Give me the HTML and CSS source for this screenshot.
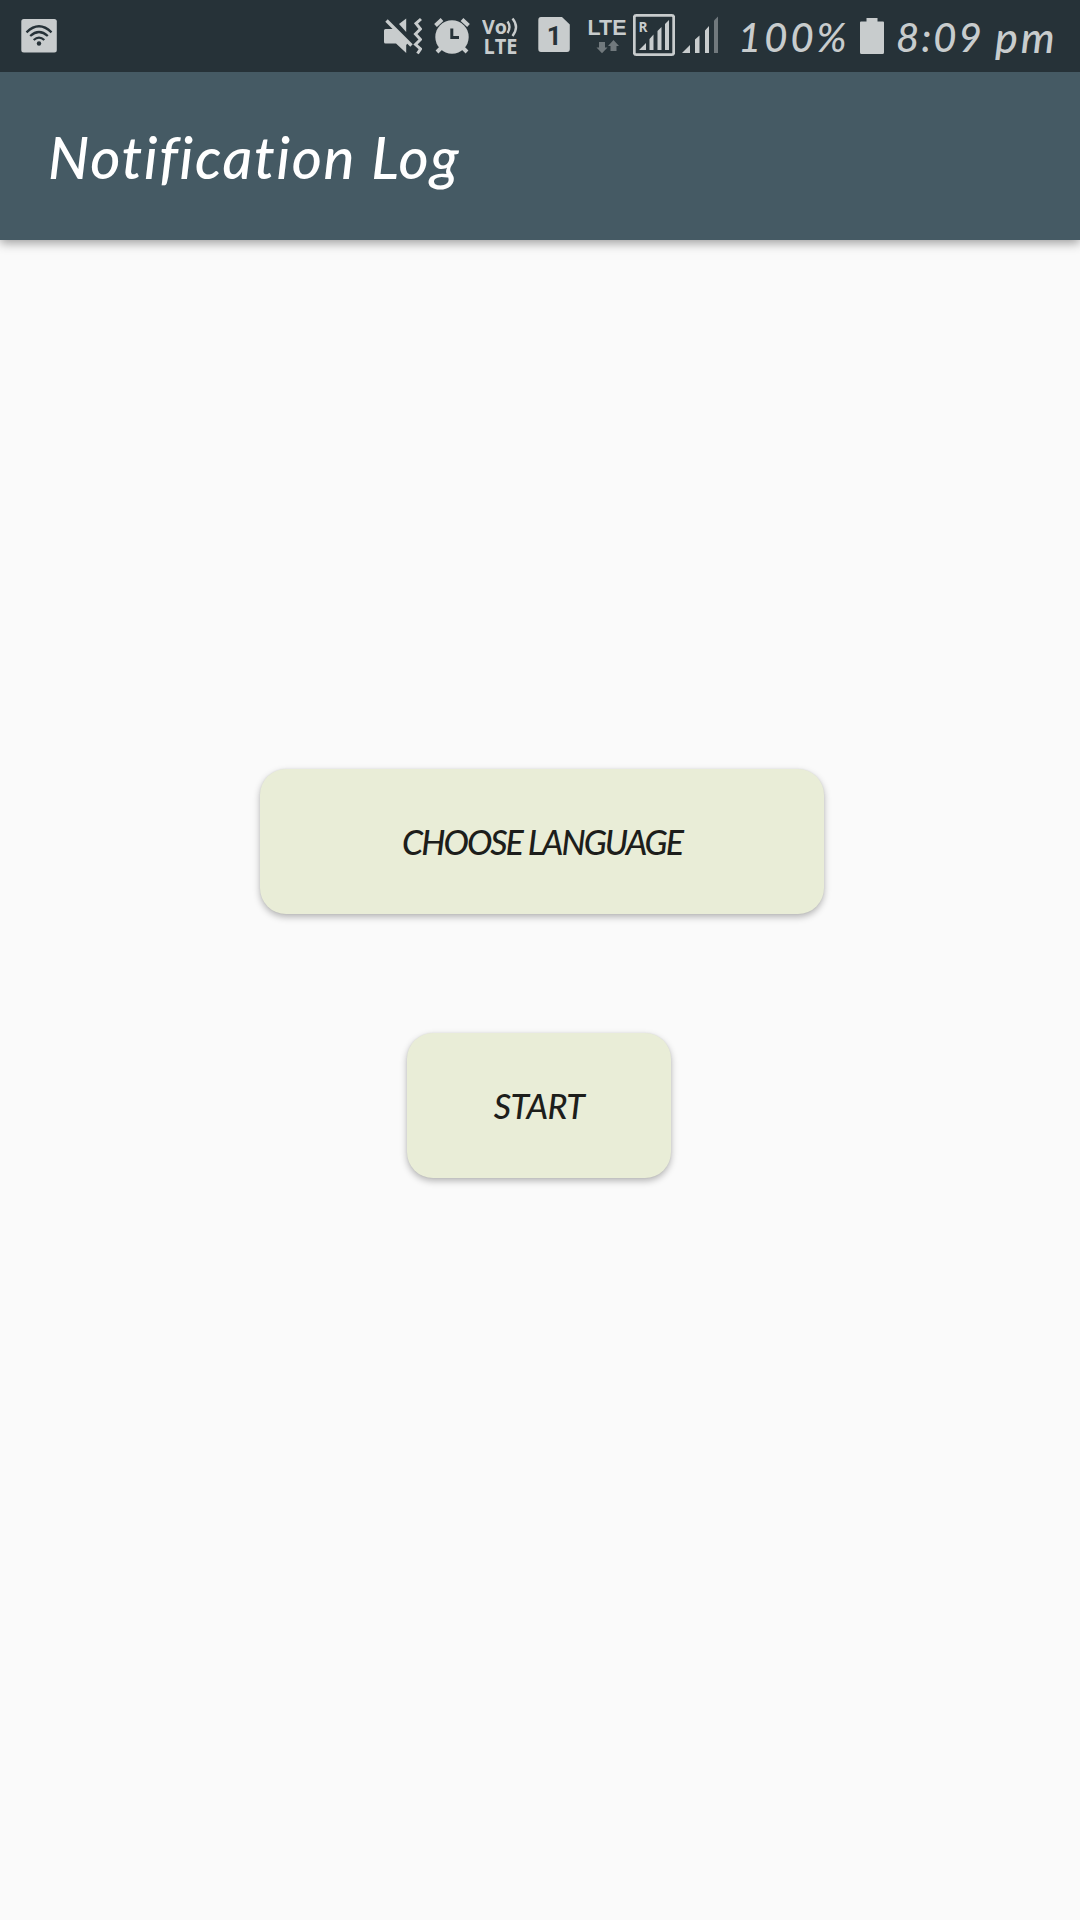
FILE: index.html
```html
<!DOCTYPE html>
<html lang="en">
<head>
<meta charset="utf-8">
<title>Notification Log</title>
<link rel="stylesheet" href="styles.css">
</head>
<body>
<div class="screen">
  <div class="status-bar">
    <svg class="icon wifi" width="36" height="72" viewBox="21 0 36 72">
      <rect x="21.3" y="19" width="35.5" height="33.5" rx="2.5" fill="#c8cccd"/>
      <g fill="none" stroke="#263238" stroke-width="2.3">
        <path d="M26.5 32.3Q39 20.3 51.5 32.3"/>
        <path d="M30.2 36Q39 28 47.8 36"/>
        <path d="M33.7 40Q39 35.3 44.3 40"/>
      </g>
      <circle cx="39" cy="43.5" r="2.2" fill="#263238"/>
    </svg>
    <div class="indicators">
      <svg class="icon mute" width="38" height="72" viewBox="384 0 38 72">
        <path d="M385.5 29H394L408 43L406.2 45V53L396 43.5H385.5Q384 43.5 384 42V30.5Q384 29 385.5 29ZM399 24L406.2 18.5V32Z"/>
        <path d="M386.5 20.5L411.5 45.5" fill="none" stroke="#c8cccd" stroke-width="3.4"/>
        <path d="M421 19L416 23.5L420.5 29L415.5 34L420.5 39.5L415.5 44.5L420.5 49L417.5 53.5" fill="none" stroke="#c8cccd" stroke-width="3"/>
      </svg>
      <svg class="icon alarm" width="36" height="72" viewBox="434 0 36 72">
        <circle cx="452" cy="37" r="16.7"/>
        <path d="M435.5 25.5L442 19.5M468.5 25.5L462 19.5M437 52L442 47M467 52L462 47" stroke="#c8cccd" stroke-width="4"/>
        <path d="M451.8 28.5V37.5H459" fill="none" stroke="#263238" stroke-width="3"/>
      </svg>
      <svg class="icon volte" width="38" height="72" viewBox="482 0 38 72">
        <text class="badge" x="482" y="33.7" font-size="20" textLength="25" lengthAdjust="spacingAndGlyphs">Vo</text>
        <text class="badge" x="483.5" y="53.5" font-size="21" textLength="34" lengthAdjust="spacingAndGlyphs">LTE</text>
        <path d="M507.5 21.5Q511.5 27 507.5 33M512.5 18.5Q519.5 27 512.5 36" fill="none" stroke="#c8cccd" stroke-width="2.4"/>
      </svg>
      <svg class="icon sim" width="32" height="72" viewBox="538 0 32 72">
        <path d="M541 17H562L569.8 24.5V49Q569.8 52 567 52H541Q538.3 52 538.3 49V20Q538.3 17 541 17Z"/>
        <text class="number" x="546.8" y="45" font-size="26">1</text>
      </svg>
      <svg class="icon lte" width="40" height="72" viewBox="588 0 40 72">
        <text class="badge wide" x="587.5" y="35" font-size="22" textLength="39" lengthAdjust="spacingAndGlyphs">LTE</text>
        <path d="M599 42H605V47.5H607.5L602 53.3L596.5 47.5H599ZM610.5 51H616.5V46H619L613.5 40L608 46H610.5Z" fill="#71797d"/>
      </svg>
      <svg class="icon roaming" width="42" height="72" viewBox="633 0 42 72">
        <rect x="634.3" y="15.3" width="39.4" height="39.4" rx="2" fill="none" stroke="#c8cccd" stroke-width="2.8"/>
        <text class="badge" x="638.5" y="32" font-size="14.5" textLength="9" lengthAdjust="spacingAndGlyphs">R</text>
        <path d="M639 50L646 43V50ZM649.5 50V39L653.5 34.5V50ZM657.5 50V31L661.5 27V50ZM665 50V24L669 20V50Z"/>
      </svg>
      <svg class="icon signal" width="36" height="72" viewBox="682 0 36 72">
        <path d="M682 53L690 45V53ZM695 53V39.5L699.5 35.5V53ZM705 53V30.5L709 26V53Z"/>
        <path d="M714 53V20.5L718 16.5V53Z" fill="#71797d"/>
      </svg>
      <span class="percent">100%</span>
      <svg class="icon battery" width="24" height="72" viewBox="860 0 24 72">
        <path d="M866.5 18H877.5V21.5H883Q884 21.5 884 22.5V52.5Q884 54 882.5 54H861.5Q860 54 860 52.5V22.5Q860 21.5 861 21.5H866.5Z"/>
      </svg>
      <span class="clock">8:09</span>
      <span class="period">pm</span>
    </div>
  </div>
  <header class="app-bar"><h1 class="title">Notification Log</h1></header>
  <main class="content">
    <button class="button language"><span>CHOOSE LANGUAGE</span></button>
    <button class="button start"><span>START</span></button>
  </main>
</div>
</body>
</html>
```
FILE: styles.css
```css
* { box-sizing: border-box; }
body { margin: 0; background: #fafafa; font-family: Lato, "Open Sans", sans-serif; font-style: italic; }
.screen { display: flex; flex-direction: column; width: 1080px; height: 1920px; overflow: hidden; background: #fafafa; }
.status-bar { position: relative; z-index: 1; display: flex; justify-content: space-between; height: 72px; padding-left: 21px; background: #263238; color: #c8cccd; }
.icon { flex: none; display: block; fill: #c8cccd; }
.badge { font-family: "Open Sans", sans-serif; font-style: normal; font-weight: 700; fill: #c8cccd; }
.wide { font-family: "Liberation Sans", sans-serif; }
.number { font-family: Roboto, sans-serif; font-style: normal; font-weight: 700; fill: #263238; }
.indicators { display: flex; width: 696px; font-size: 40px; font-weight: 500; line-height: 74px; white-space: nowrap; }
.alarm { margin-left: 12px; }
.volte { margin-left: 12px; }
.sim { margin-left: 18px; }
.lte { margin-left: 18px; }
.roaming { margin-left: 5px; }
.signal { margin-left: 7px; }
.percent { flex: none; width: 122px; margin-left: 20px; letter-spacing: 3px; }
.clock { flex: none; width: 99px; margin-left: 12px; letter-spacing: 2px; }
.period { font-size: 43px; letter-spacing: 3px; }
.app-bar { position: relative; flex: none; display: flex; height: 168px; padding: 45px 0 0 48px; background: #455a64; box-shadow: 0 3px 10px rgba(0, 0, 0, .38); }
.title { margin: 0; color: #fff; font-size: 58px; font-weight: 500; line-height: 80px; letter-spacing: 1.7px; white-space: nowrap; }
.content { display: flex; flex-direction: column; align-items: flex-start; padding-top: 529px; }
.button { height: 145px; padding: 0; border: 0; border-radius: 26px; background: #e9edd7; box-shadow: 0 3px 7px rgba(0, 0, 0, .28), 0 0 2px rgba(0, 0, 0, .08); color: #1d1e1b; font: italic 500 34px/48px Lato, "Open Sans", sans-serif; white-space: nowrap; }
.language { width: 564px; margin-left: 260px; letter-spacing: -2px; }
.start { width: 264px; margin: 119px 0 0 407px; letter-spacing: -.6px; }
```
